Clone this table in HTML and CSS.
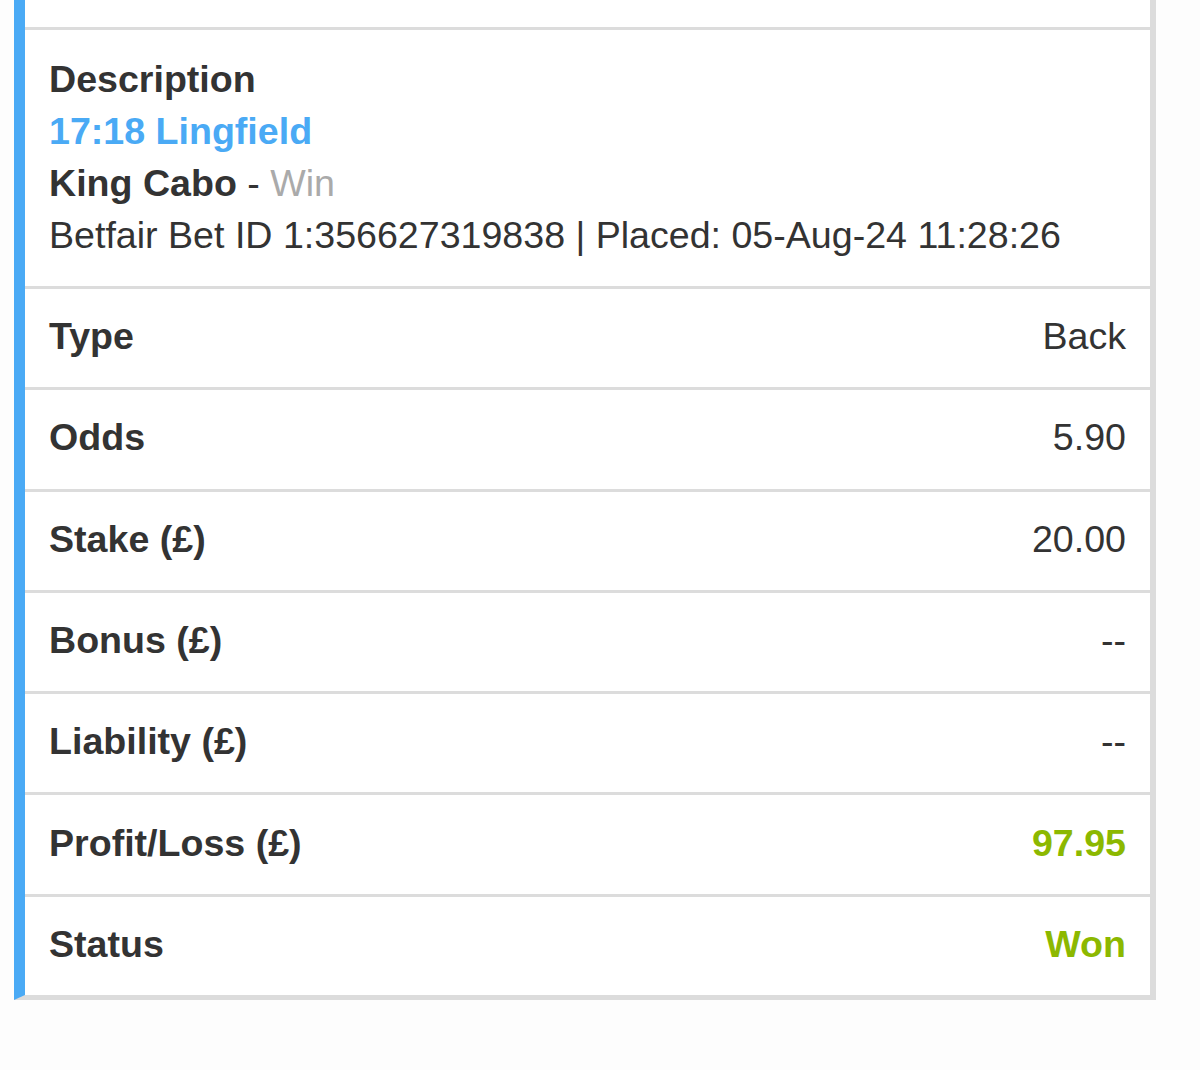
FILE: index.html
```html
<!DOCTYPE html>
<html lang="en">
<head>
    <meta charset="UTF-8">
    <meta name="viewport" content="width=device-width, initial-scale=1.0">
    <title>Bet Details</title>
    <link rel="stylesheet" href="styles.css">
</head>
<body>

    <div class="bet-card">
        <div class="row-stub"></div>

        <div class="description">
            <div class="label">Description</div>
            <div class="event">17:18 Lingfield</div>
            <div><span class="label">King Cabo</span> - <span class="market">Win</span></div>
            <div>Betfair Bet ID 1:356627319838 | Placed: 05-Aug-24 11:28:26</div>
        </div>

        <div class="row">
            <span class="label">Type</span>
            <span class="value">Back</span>
        </div>
        <div class="row">
            <span class="label">Odds</span>
            <span class="value">5.90</span>
        </div>
        <div class="row">
            <span class="label">Stake (£)</span>
            <span class="value">20.00</span>
        </div>
        <div class="row">
            <span class="label">Bonus (£)</span>
            <span class="value">--</span>
        </div>
        <div class="row">
            <span class="label">Liability (£)</span>
            <span class="value">--</span>
        </div>
        <div class="row">
            <span class="label">Profit/Loss (£)</span>
            <span class="value won">97.95</span>
        </div>
        <div class="row">
            <span class="label">Status</span>
            <span class="value won">Won</span>
        </div>
    </div>

</body>
</html>
```

FILE: styles.css
```css
body {
    margin: 0;
    background-color: #fdfdfd;
    font-family: "Liberation Sans", Arial, sans-serif;
    font-size: 37.6px;
    color: #333;
}

.bet-card {
    width: 1125px;
    margin-left: 14px;
    background-color: #fff;
    border-left: 11px solid #4aaaf5;
    border-right: 6px solid #dcdcdc;
    border-bottom: 5px solid #dcdcdc;
}

.row-stub {
    height: 27px;
}

.description {
    border-top: 3px solid #dcdcdc;
    padding: 23px 24px 25px;
    line-height: 52px;
}

.label {
    font-weight: bold;
}

.event {
    color: #4aaaf5;
    font-weight: bold;
}

.market {
    color: #aaa;
}

.row {
    display: flex;
    justify-content: space-between;
    align-items: center;
    height: 95.3px;
    padding: 0 24px 3px;
    border-top: 3px solid #dcdcdc;
}

.won {
    color: #8cb800;
    font-weight: bold;
}
```
